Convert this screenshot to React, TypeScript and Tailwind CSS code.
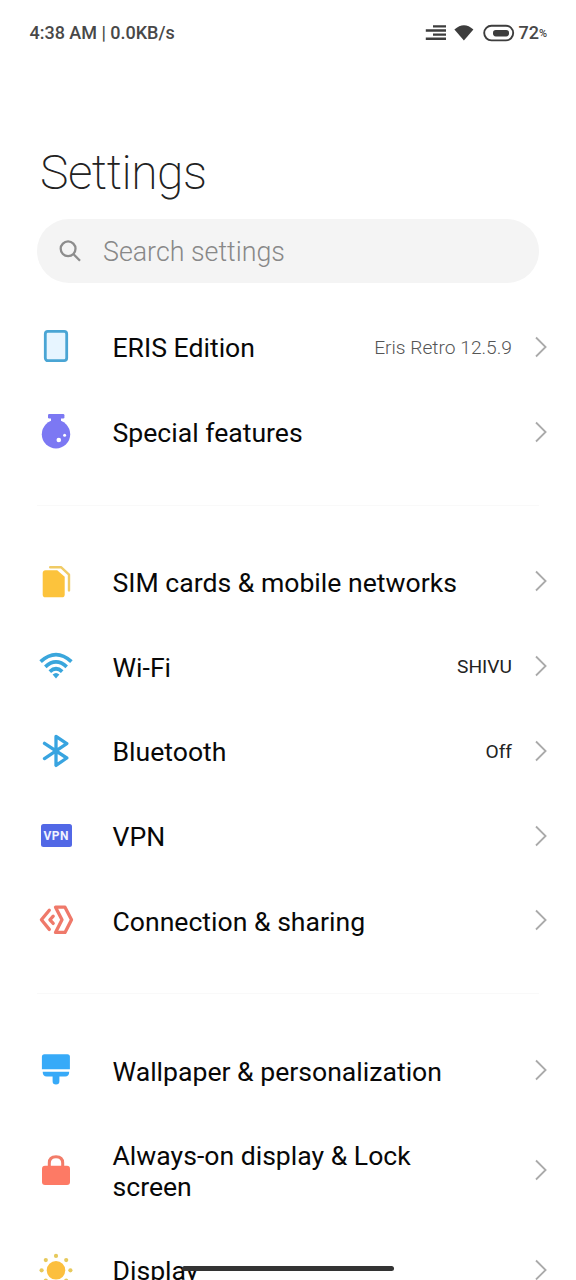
import type { ReactNode } from 'react';

type Item = { label: string; icon: ReactNode; value?: string; muted?: boolean; tall?: boolean };

const Icon = ({ children }: { children: ReactNode }) => (
  <svg viewBox="0 0 40 40" className="h-10 w-10 shrink-0" fill="none">
    {children}
  </svg>
);

const PhoneIcon = () => (
  <Icon>
    <rect x="9.3" y="4.3" width="21.4" height="29.4" rx="2.6" fill="#e7f5ff" stroke="#4aa5d4" strokeWidth="2.8" />
  </Icon>
);

const FlaskIcon = () => (
  <Icon>
    <rect x="12" y="2" width="16.4" height="4.4" rx="1.2" fill="#7c78f3" />
    <rect x="15" y="5" width="10" height="6" fill="#7c78f3" />
    <circle cx="20" cy="22.2" r="14.2" fill="#7c78f3" />
    <circle cx="22.8" cy="28" r="2.3" fill="#fff" />
    <circle cx="28.6" cy="23.2" r="1.5" fill="#fff" />
  </Icon>
);

const SimIcon = () => (
  <Icon>
    <path d="M9.6 9.2H21.2L28.7 15.8V33.4Q28.7 36.3 25.8 36.3H9.6Q6.7 36.3 6.7 33.4V12.1Q6.7 9.2 9.6 9.2Z" fill="#fcc33c" />
    <path d="M14.2 6.2H25L33 13.6V29.4" stroke="#f0cb65" strokeWidth="2.4" strokeLinecap="round" strokeLinejoin="round" />
  </Icon>
);

const WifiIcon = () => (
  <Icon>
    <g stroke="#3aa6dc" strokeWidth="3.7">
      <path d="M4.6 15.6Q20 1.6 35.4 15.6" />
      <path d="M9.3 20.8Q20 11 30.7 20.8" />
      <path d="M13.8 25.6Q20 19.8 26.2 25.6" />
    </g>
    <path d="M16.6 28.6Q20 25.6 23.4 28.6L20 32.4Z" fill="#3aa6dc" />
  </Icon>
);

const BluetoothIcon = () => (
  <Icon>
    <path d="M8.5 12.3L30.8 27L20 34.4V5.4L30.8 12.7L8.5 27.6" stroke="#38a4e0" strokeWidth="3.3" strokeLinecap="round" strokeLinejoin="round" />
  </Icon>
);

const VpnIcon = () => (
  <div className="flex h-10 w-10 shrink-0 items-center justify-center">
    <span className="flex h-[23px] w-[31px] items-center justify-center rounded-[2.5px] bg-[#5268e6] text-[12px] leading-none font-bold tracking-[0.4px] text-[#f1f3ff]">
      <span className="-mr-[0.4px]">VPN</span>
    </span>
  </div>
);

const ShareIcon = () => (
  <Icon>
    <g stroke="#ef796a" strokeWidth="3.3" strokeLinejoin="round" strokeLinecap="round">
      <path d="M13.3 10.2L5.4 19.8L13.3 29.4" />
      <path d="M17.2 16.2L13.9 19.8L17.2 23.4" />
      <path d="M19.5 7.2H29L35.5 19.8L29 32.4H19.5L26 19.8Z" />
    </g>
  </Icon>
);

const BrushIcon = () => (
  <Icon>
    <path d="M8.4 4.2H31.4Q33.9 4.2 33.9 6.7V19.2H5.9V6.7Q5.9 4.2 8.4 4.2Z" fill="#37aaf8" />
    <path d="M6.7 21.8H33.2Q33.2 26.6 29.2 26.6H23.4V31.2Q23.4 34.4 20 34.4T16.6 31.2V26.6H10.7Q6.7 26.6 6.7 21.8Z" fill="#37aaf8" />
  </Icon>
);

const LockIcon = () => (
  <Icon>
    <path d="M13.3 17V12.9Q13.3 6.7 20 6.7T26.7 12.9V17" stroke="#f27c69" strokeWidth="3" />
    <rect x="6" y="15.7" width="28" height="19.2" rx="3" fill="#fd7a65" />
  </Icon>
);

const SunIcon = () => (
  <Icon>
    <circle cx="20" cy="20.3" r="9.3" fill="#fcbf3e" />
    <g fill="#e6c95c">
      <circle cx="20" cy="5.9" r="2.1" />
      <circle cx="9.8" cy="10.1" r="2.1" />
      <circle cx="30.2" cy="10.1" r="2.1" />
      <circle cx="5.6" cy="20.3" r="2.1" />
      <circle cx="34.4" cy="20.3" r="2.1" />
      <circle cx="9.8" cy="30.5" r="2.1" />
      <circle cx="30.2" cy="30.5" r="2.1" />
    </g>
  </Icon>
);

const groups: Item[][] = [
  [
    { label: 'ERIS Edition', icon: <PhoneIcon />, value: 'Eris Retro 12.5.9', muted: true },
    { label: 'Special features', icon: <FlaskIcon /> },
  ],
  [
    { label: 'SIM cards & mobile networks', icon: <SimIcon /> },
    { label: 'Wi-Fi', icon: <WifiIcon />, value: 'SHIVU' },
    { label: 'Bluetooth', icon: <BluetoothIcon />, value: 'Off' },
    { label: 'VPN', icon: <VpnIcon /> },
    { label: 'Connection & sharing', icon: <ShareIcon /> },
  ],
  [
    { label: 'Wallpaper & personalization', icon: <BrushIcon /> },
    { label: 'Always-on display & Lock screen', icon: <LockIcon />, tall: true },
    { label: 'Display', icon: <SunIcon /> },
  ],
];

const Row = ({ label, icon, value, muted, tall }: Item) => (
  <li className={`flex items-center pr-[29px] pl-9 ${tall ? 'h-[115px]' : 'h-[84.75px]'}`}>
    {icon}
    <span className="ml-[36.5px] max-w-[350px] pt-[1.8px] text-[26.6px] leading-[31px] text-[#080808]">{label}</span>
    {value && (
      <span className={`ml-auto pt-[3px] text-[19.2px] ${muted ? 'font-light text-[#555]' : 'text-[#222]'}`}>{value}</span>
    )}
    <svg viewBox="0 0 12 22" className={`h-[22px] w-3 shrink-0 ${value ? 'ml-[23px]' : 'ml-auto'}`} fill="none">
      <path d="M1 1.5L10.6 11L1 20.5" stroke="#aaa" strokeWidth="1.8" />
    </svg>
  </li>
);

export default function App() {
  return (
    <div className="relative flex h-[1280px] w-[576px] flex-col overflow-hidden bg-white font-[Roboto,sans-serif]">
      <header className="flex h-[65px] shrink-0 items-center justify-between pr-[29px] pl-[29.5px] text-[18px] font-medium text-[#484848]">
        <span className="tracking-[-0.02px]">4:38 AM | 0.0KB/s</span>
        <div className="flex items-center">
          <svg viewBox="0 0 90 18" className="h-[18px] w-[90px]" fill="none">
            <g fill="#3d3d3d">
              <path d="M8 1.2H21V3.6H8ZM0.8 5.3H21V7.7H0.8ZM8 9.4H21V11.8H8ZM0.8 13.5H21V15.9H0.8Z" />
              <path d="M29.4 5.5Q39 -3.2 48.4 5.5L38.9 16.6Z" />
              <rect x="68" y="6" width="16" height="6.4" rx="2.8" />
            </g>
            <rect x="59.2" y="1.8" width="29" height="14.6" rx="7.3" stroke="#3d3d3d" strokeWidth="1.9" />
          </svg>
          <span className="ml-[3px]">72</span>
          <span className="pt-1 text-[11px] font-medium">%</span>
        </div>
      </header>
      <h1 className="mt-[77px] ml-[40px] h-[62px] shrink-0 text-[48px] leading-[62px] font-extralight tracking-[-0.5px] text-[#222]">
        Settings
      </h1>
      <div className="mt-[15px] mr-[37px] ml-[37px] flex h-[64px] shrink-0 items-center rounded-full bg-[#f4f4f4] pl-[22px]">
        <svg viewBox="0 0 24 24" className="h-6 w-6" fill="none" stroke="#8d8d8d" strokeWidth="2.3">
          <circle cx="9.1" cy="9.8" r="7.4" />
          <path d="M14.3 15L21 21.8" />
        </svg>
        <span className="ml-5 pt-[2px] text-[26.8px] font-light text-[#888]">Search settings</span>
      </div>
      <main className="mt-[21.6px]">
        {groups.map((items, index) => (
          <section key={index}>
            {index > 0 && <hr className="mx-[37px] mt-[30.6px] mb-[33.4px] border-t border-[#f9f9f9]" />}
            <ul>
              {items.map((item) => (
                <Row key={item.label} {...item} />
              ))}
            </ul>
          </section>
        ))}
      </main>
      <div className="absolute top-[1266px] left-[182px] h-[5px] w-[212px] rounded-full bg-[#333]" />
    </div>
  );
}
